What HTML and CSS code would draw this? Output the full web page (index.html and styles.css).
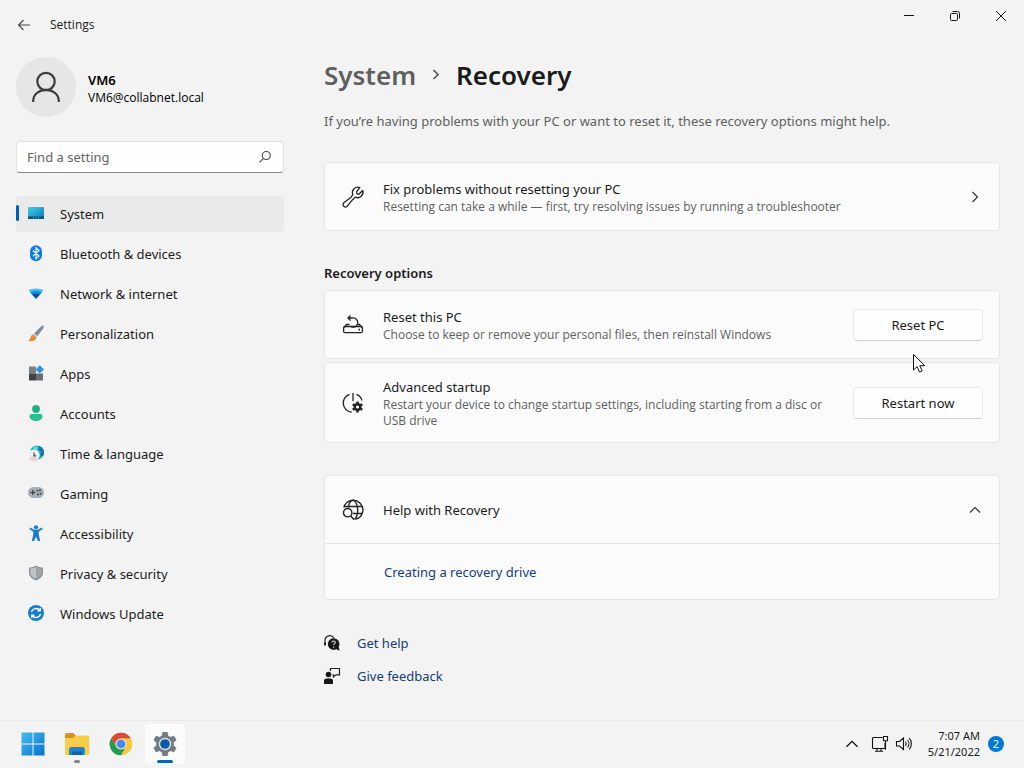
FILE: index.html
```
<!DOCTYPE html>
<html lang="en">
<head>
    <meta charset="UTF-8">
    <meta name="viewport" content="width=device-width, initial-scale=1.0">
    <title>Settings</title>
    <link rel="stylesheet" href="styles.css">
</head>
<body>

    <header class="titlebar">
        <button class="back-btn" aria-label="Back">
            <svg width="16" height="16" viewBox="0 0 16 16" fill="none" stroke="#444" stroke-width="1.1"><path d="M14 8H2.5M7.5 3L2.5 8l5 5"/></svg>
        </button>
        <span class="app-title">Settings</span>
        <div class="window-controls">
            <button aria-label="Minimize"><svg width="12" height="12" viewBox="0 0 12 12" fill="none" stroke="#111"><path d="M1 5.5h10"/></svg></button>
            <button aria-label="Restore"><svg width="12" height="12" viewBox="0 0 12 12" fill="none" stroke="#111"><rect x="1.500" y="3.500" width="7" height="7" rx="1"/><path d="M3.500 1.500h5a2 2 0 0 1 2 2v5"/></svg></button>
            <button aria-label="Close"><svg width="12" height="12" viewBox="0 0 12 12" fill="none" stroke="#111"><path d="M1 1l10 10M11 1L1 11"/></svg></button>
        </div>
    </header>

    <div class="window">
        <aside class="sidebar">
            <div class="profile">
                <div class="avatar">
                    <svg width="32" height="36" viewBox="0 0 32 36" fill="none" stroke="#3b3b3b" stroke-width="2.2"><circle cx="16" cy="12.500" r="8.700"/><path d="M3.200 33v-1.200a12.800 11 0 0 1 25.600 0V33"/></svg>
                </div>
                <div class="user">
                    <div class="user-name">VM6</div>
                    <div class="user-mail">VM6@collabnet.local</div>
                </div>
            </div>

            <div class="search">
                <input type="text" id="search" placeholder="Find a setting" aria-label="Find a setting">
                <svg width="14" height="14" viewBox="0 0 14 14" fill="none" stroke="#444" stroke-width="1.1"><circle cx="8.300" cy="5.500" r="4"/><path d="M5.400 8.400L1.500 12.300"/></svg>
            </div>

            <nav class="nav">
                <a href="#" class="nav-item active">
                    <svg width="16" height="16" viewBox="0 0 16 16"><defs><linearGradient id="sys" x1="0" y1="0" x2="1" y2="1"><stop offset="0" stop-color="#3fd0e6"/><stop offset="1" stop-color="#0d78bd"/></linearGradient></defs><rect y="1" width="16" height="12" rx="1" fill="url(#sys)"/><path d="M0 10.500h16V12a1 1 0 0 1-1 1H1a1 1 0 0 1-1-1z" fill="#0b4f7c"/><path d="M5 11.800h1M7.500 11.800h1M10 11.800h1" stroke="#6cc6ea"/></svg>
                    System
                </a>
                <a href="#" class="nav-item">
                    <svg width="16" height="16" viewBox="0 0 16 16"><rect x="2" y="-.8" width="12" height="16" rx="6" fill="#0f7be6"/><path d="M5 4.500L11 10l-3 2.700V1.800l3 2.700L5 10" fill="none" stroke="#fff" stroke-width="1.1"/></svg>
                    Bluetooth &amp; devices
                </a>
                <a href="#" class="nav-item">
                    <svg width="16" height="16" viewBox="0 0 16 16"><path d="M.5 4.500C2.500 1.700 13.500 1.700 15.500 4.500L8 12.800z" fill="#45c6ee"/><path d="M2.100 6.500c3-2.200 8.800-2.200 11.800 0L8 12.800z" fill="#1b8edb"/><path d="M4 8.500c2.200-1.400 5.800-1.400 8 0l-4 4.300z" fill="#0a4fa8"/></svg>
                    Network &amp; internet
                </a>
                <a href="#" class="nav-item">
                    <svg width="16" height="16" viewBox="0 0 16 16"><path d="M15.500-.2c.5.5.3 1.500-.2 2.400L9.500 10 6.300 7.300 13 .6c.9-.8 2-1.300 2.500-.8z" fill="#7e8c98"/><path d="M6.300 7.300L9.500 10l-1.200 1.500-3.200-2.900z" fill="#bcc5cb"/><path d="M5.200 8.500l3.200 3c-.4 3.300-4.500 4.700-8 3.300 2.200-.8 1.700-5.900 4.800-6.300z" fill="#ee8a35"/></svg>
                    Personalization
                </a>
                <a href="#" class="nav-item">
                    <svg width="16" height="16" viewBox="0 0 16 16"><path d="M1 .500h7v7H1z" fill="#7b7f82"/><path d="M1 7.500h7v7H1z" fill="#3e4245"/><path d="M8 7.500h7v7H8z" fill="#6a6e71"/><path d="M11.800-.8l4.200 4.200-4.200 4.200-4.200-4.200z" fill="#2c95e2"/></svg>
                    Apps
                </a>
                <a href="#" class="nav-item">
                    <svg width="16" height="16" viewBox="0 0 16 16"><circle cx="8" cy="3" r="3.900" fill="#24ae84"/><path d="M3.500 8h9a2 2 0 0 1 2 2c0 3.400-3 5-6.500 5s-6.500-1.600-6.500-5a2 2 0 0 1 2-2z" fill="#30bb90"/></svg>
                    Accounts
                </a>
                <a href="#" class="nav-item">
                    <svg width="16" height="16" viewBox="0 0 16 16"><circle cx="9" cy="6.500" r="7" fill="#20adc0"/><path d="M11 0a7 7 0 0 1 4 10.500L11.500 9l2-3-3-2.500z" fill="#1673b0"/><path d="M5 1.500l4-1.500 1 3-3 2z" fill="#63dad1"/><circle cx="5.900" cy="9.200" r="5.800" fill="#eff2f5"/><path d="M.8 12a5.800 5.800 0 0 0 9 1.500L6 10z" fill="#edd2d5"/><path d="M6 6.500v3.400h2.200" fill="none" stroke="#444" stroke-width="1.200"/></svg>
                    Time &amp; language
                </a>
                <a href="#" class="nav-item">
                    <svg width="16" height="16" viewBox="0 0 16 16"><rect y="1" width="16" height="11" rx="5.500" fill="#a8afb6"/><path d="M2.300 6.500h5M4.800 4v5" stroke="#353b40" stroke-width="1.200"/><circle cx="9.300" cy="4.700" r=".9" fill="#3e4449"/><circle cx="12" cy="4.200" r="1" fill="#3e4449"/><circle cx="10" cy="8.500" r="1" fill="#3e4449"/><circle cx="12.600" cy="7.800" r="1" fill="#3e4449"/></svg>
                    Gaming
                </a>
                <a href="#" class="nav-item">
                    <svg width="16" height="16" viewBox="0 0 16 16" fill="#177bd0"><circle cx="8" cy="1.300" r="2.100"/><path d="M2.200 1.500l4 2.300h3.600l4-2.300.9 1.500-4 2.700v3l1.500 6.200H10L8 10.700l-2 4.200H3.800l1.500-6.200v-3L1.300 3z"/></svg>
                    Accessibility
                </a>
                <a href="#" class="nav-item">
                    <svg width="16" height="16" viewBox="0 0 16 16"><path d="M8-.5c2 1.400 4.200 2 6.900 2.100V6.500c0 3.900-2.700 6.300-6.900 8C3.800 12.800 1.100 10.400 1.100 6.500V1.600C3.800 1.500 6 .9 8-.5z" fill="#858b90"/><path d="M8 .8C6.200 2 4.400 2.400 2.300 2.600v3.900c0 3.100 2 5 5.700 6.600z" fill="#bfc4c7"/><path d="M8 .8c1.800 1.200 3.600 1.600 5.700 1.800v3.900c0 3.100-2 5-5.700 6.600z" fill="#9fa5a9"/></svg>
                    Privacy &amp; security
                </a>
                <a href="#" class="nav-item">
                    <svg width="16" height="16" viewBox="0 0 16 16"><circle cx="8" cy="7" r="8" fill="#127fd2"/><path d="M3.500 6A4.800 4.800 0 0 1 12 4.500M12.500 8A4.800 4.800 0 0 1 4 9.500M12.300 2V4.800H9.500M3.700 12V9.200h2.800" fill="none" stroke="#fff" stroke-width="1.300"/></svg>
                    Windows Update
                </a>
            </nav>
        </aside>

        <main class="content">
            <h1 class="breadcrumb">
                <a href="#">System</a>
                <svg width="10" height="14" viewBox="0 0 10 14" fill="none" stroke="#555" stroke-width="1.700"><path d="M2.500 2L7 6.500 2.500 11"/></svg>
                <span>Recovery</span>
            </h1>
            <p class="intro">If you’re having problems with your PC or want to reset it, these recovery options might help.</p>

            <a href="#" class="card">
                <svg class="card-icon" width="22" height="22" viewBox="0 0 22 22" fill="none" stroke="#222" stroke-width="1.300" stroke-linejoin="round"><path d="M17.800 1.600a5.400 5.400 0 0 0-7 7L8.800 11.500 1.800 16.700a2.400 2.400 0 0 0 3.500 3.500l5.500-6.800 2.600-2.200a5.400 5.400 0 0 0 7.300-6.700l-3.900 3.800-1.700-.5-.6-1.900z"/></svg>
                <div class="card-text">
                    <div class="card-title">Fix problems without resetting your PC</div>
                    <div class="card-desc">Resetting can take a while — first, try resolving issues by running a troubleshooter</div>
                </div>
                <svg class="chevron" width="14" height="14" viewBox="0 0 14 14" fill="none" stroke="#333" stroke-width="1.200"><path d="M4.500 2L9.500 7l-5 5"/></svg>
            </a>

            <h2 class="section-title">Recovery options</h2>
            <section class="card-list">
                <div class="card">
                    <svg class="card-icon" width="22" height="22" viewBox="0 0 22 22" fill="none" stroke="#222" stroke-width="1.300"><rect x="1.600" y="12.500" width="18.800" height="6.200" rx="1.500"/><path d="M2 13.500l2.500-3h3M20 13.500l-2.500-3h-2"/><path d="M8.500 12.300a4.600 4.600 0 1 0 2-8.300H6M8.500 1.500L6 4l2.500 2.500"/><path d="M16.500 15.600h1.500" stroke-width="1.800"/></svg>
                    <div class="card-text">
                        <div class="card-title">Reset this PC</div>
                        <div class="card-desc">Choose to keep or remove your personal files, then reinstall Windows</div>
                    </div>
                    <button class="btn">Reset PC</button>
                </div>
                <div class="card">
                    <svg class="card-icon" width="22" height="22" viewBox="0 0 22 22" fill="none" stroke="#222" stroke-width="1.300"><path d="M11 1v8"/><path d="M7.500 2.300A9.200 9.200 0 0 0 9.800 20.200M14.500 2.300a9.200 9.200 0 0 1 5.500 6.200"/><circle cx="15.500" cy="15" r="2.800" stroke-width="2.400"/><path d="M15.500 9.500v2.500M15.500 18v2.500M10.700 12.200l2.200 1.300M18.100 16.500l2.200 1.300M10.700 17.800l2.200-1.300M18.100 13.500l2.200-1.300" stroke-width="2.400"/></svg>
                    <div class="card-text">
                        <div class="card-title">Advanced startup</div>
                        <div class="card-desc">Restart your device to change startup settings, including starting from a disc or USB drive</div>
                    </div>
                    <button class="btn">Restart now</button>
                </div>
            </section>

            <section class="expander">
                <button class="expander-head" aria-expanded="true">
                    <svg class="card-icon" width="22" height="22" viewBox="0 0 22 22" fill="none" stroke="#222" stroke-width="1.400"><path d="M1.800 8.500A9.700 9.700 0 1 1 14 20.200"/><path d="M6.500 8.500C7 4 9 1.300 11 1.300s4.700 4 4.700 9.700-1.200 7.500-3 9.500M2.300 7.500h17.400M11 14.500h9"/><circle cx="5.700" cy="13.700" r="4.200"/><path d="M8.700 17l3.500 3.800"/></svg>
                    <span class="card-title">Help with Recovery</span>
                    <svg class="chevron" width="14" height="14" viewBox="0 0 14 14" fill="none" stroke="#333" stroke-width="1.200"><path d="M2 9.500L7 4.500l5 5"/></svg>
                </button>
                <div class="expander-body"><a href="#">Creating a recovery drive</a></div>
            </section>

            <div class="help-links">
                <a href="#">
                    <svg width="16" height="16" viewBox="0 0 16 16"><path d="M1 10V5.500a4.800 4.800 0 0 1 9-2.300" fill="none" stroke="#222" stroke-width="1.200"/><path d="M0 7.500h2v3H0z" fill="#222"/><path d="M9.500 3.200a5.800 5.800 0 1 0 2.700 11l3.500 1.500-1-3.800A5.800 5.800 0 0 0 9.500 3.200z" fill="#181818"/><path d="M7.800 7.500c.2-2 3.700-1.800 3.500.1-.1 1.100-1.700 1.200-1.700 2.700M9.600 11.500v1.200" fill="none" stroke="#ccc" stroke-width="1.100"/></svg>
                    Get help
                </a>
                <a href="#">
                    <svg width="16" height="16" viewBox="0 0 16 16"><circle cx="4.500" cy="6.500" r="2.800" fill="#181818"/><path d="M0 16v-3a2.500 2.500 0 0 1 2.500-2.500h4A2.500 2.500 0 0 1 9 13v3z" fill="#181818"/><path d="M6.500 3V.5h9v6.400H12l-2.500 2v-2h-1" fill="none" stroke="#222" stroke-width="1.200"/></svg>
                    Give feedback
                </a>
            </div>
        </main>
    </div>

    <footer class="taskbar">
        <div class="task-apps">
            <button aria-label="Start"><svg width="24" height="24" viewBox="0 0 24 24"><defs><linearGradient id="win" x1="0" y1="0" x2="1" y2="1"><stop offset="0" stop-color="#43bdf0"/><stop offset="1" stop-color="#0872ca"/></linearGradient></defs><path d="M.5.500h11v11H.5zM12.500.500h11v11h-11zM.5 12.500h11v11H.5zM12.500 12.500h11v11h-11z" fill="url(#win)"/></svg></button>
            <button aria-label="File Explorer" class="running"><svg width="26" height="24" viewBox="0 0 26 24"><path d="M1 2.500A1.500 1.500 0 0 1 2.500 1h7l2.500 3v4H1z" fill="#d49718"/><path d="M1 6h8l2.500-2.500H24A1.200 1.200 0 0 1 25.200 5v16.500A1.500 1.500 0 0 1 23.700 23H2.500A1.500 1.500 0 0 1 1 21.500z" fill="#f8cd4b"/><path d="M5 23v-5.500A2.500 2.500 0 0 1 7.500 15h10.800a2.500 2.500 0 0 1 2.500 2.500V23z" fill="#1e82d2"/><path d="M8 23v-3.500h10V23z" fill="#1261a8"/></svg></button>
            <button aria-label="Google Chrome"><svg width="24" height="24" viewBox="0 0 24 24"><circle cx="12" cy="12" r="11.300" fill="#f8c83e"/><path d="M2.200 6.300A11.300 11.300 0 0 1 21.800 6.300H12a5.700 5.700 0 0 0-5 8.500z" fill="#d94a3d"/><path d="M2.200 6.300A11.300 11.300 0 0 0 12 23.300l4.900-8.500a5.700 5.700 0 0 1-9.800 0z" fill="#229a57"/><circle cx="12" cy="12" r="5.200" fill="#e8eefa"/><circle cx="12" cy="12" r="4.400" fill="#4688ef"/></svg></button>
            <button aria-label="Settings" class="current"><svg width="26" height="26" viewBox="0 0 26 26"><path d="M10.500 1h5l.8 3.700 2.200 1.200 3.500-1.200 2.500 4.300-2.700 2.600v2.800l2.700 2.600-2.500 4.300-3.500-1.200-2.200 1.200-.8 3.700h-5l-.8-3.700-2.200-1.200L4 21.300 1.500 17l2.700-2.600v-2.800L1.500 9 4 4.700l3.500 1.200 2.200-1.200z" fill="#747b82"/><circle cx="13" cy="13" r="6.200" fill="#d9e6f0"/><circle cx="13" cy="13" r="4.800" fill="#0b5ba7"/></svg></button>
        </div>
        <div class="tray">
            <button aria-label="Show hidden icons"><svg width="14" height="14" viewBox="0 0 14 14" fill="none" stroke="#111" stroke-width="1.300"><path d="M1.500 9.800L7 4.300l5.500 5.500"/></svg></button>
            <button aria-label="Network and volume" class="tray-status">
                <svg width="18" height="18" viewBox="0 0 18 18" fill="none" stroke="#111" stroke-width="1.100"><path d="M11.500 2.500h-9a1 1 0 0 0-1 1v9a1 1 0 0 0 1 1H14V8M4 16.200h8M6 13.500v2.700M10 13.500v2.700M12.500 1.500h4v4.200h-4zM14.500 5.700v9"/></svg>
                <svg width="18" height="18" viewBox="0 0 18 18" fill="none" stroke="#111" stroke-width="1.100"><path d="M1.500 6.500h3l4-3.500v11.500l-4-3.500h-3zM10.500 6.700a3.500 3.500 0 0 1 0 4.100M12.500 5a5.700 5.700 0 0 1 0 7.500M14.300 3.200a8.500 8.500 0 0 1 0 11.100"/></svg>
            </button>
            <div class="clock"><div>7:07 AM</div><div>5/21/2022</div></div>
            <span class="notify">2</span>
        </div>
    </footer>

    <svg class="cursor" width="14" height="20" viewBox="0 0 14 20"><path d="M.500.500V16l3.600-3.400 2.400 5.500 2.700-1.200-2.400-5.200h5z" fill="#fff" stroke="#111"/></svg>

</body>
</html>
```

FILE: styles.css
```
* { box-sizing: border-box; }
body { margin: 0; min-height: 100vh; display: flex; flex-direction: column; background: #f3f3f3; color: #1b1b1b; font-family: "Noto Sans", "Open Sans", sans-serif; font-size: 13px; line-height: 20px; }
button { font: inherit; color: inherit; background: none; border: none; padding: 0; display: flex; align-items: center; justify-content: center; }
a { color: #143c78; text-decoration: none; }
svg { flex: none; display: block; overflow: visible; }

.app-title, .user-mail, .card-desc { font-family: "Open Sans", "Noto Sans", sans-serif; font-size: 12px; line-height: 16px; }

.titlebar { height: 49px; display: flex; align-items: center; padding-left: 16px; }
.app-title { margin-left: 18px; }
.window-controls { margin-left: auto; align-self: flex-start; display: flex; }
.window-controls button { width: 46px; height: 32px; }

.window { flex: 1; display: flex; }
.sidebar { width: 300px; flex: none; padding: 8px 16px 0; }
.profile { display: flex; align-items: center; gap: 12px; margin-bottom: 24px; }
.avatar { width: 60px; height: 60px; border-radius: 50%; background: #e6e6e6; display: flex; align-items: center; justify-content: center; }
.user { padding-top: 2px; }
.user-name { font-weight: 600; color: #000; }
.user-mail { color: #000; }

.search { display: flex; align-items: center; height: 32px; padding: 0 11px 0 10px; background: #fefefe; border: 1px solid #e2e2e2; border-bottom-color: #868686; border-radius: 4px; margin-bottom: 23px; }
.search input { flex: 1; min-width: 0; border: none; outline: none; background: none; font: inherit; padding: 0; }
.search input::placeholder { color: #646464; opacity: 1; }

.nav { display: flex; flex-direction: column; gap: 4px; }
.nav-item { position: relative; display: flex; align-items: center; gap: 16px; height: 36px; padding-left: 12px; border-radius: 4px; color: #1b1b1b; }
.nav-item.active { background: #eaeaea; }
.nav-item.active::before { content: ""; position: absolute; left: 0; top: 9px; width: 3px; height: 16px; border-radius: 2px; background: #005fb8; }

.content { flex: 1; padding: 6px 24px 24px; }
.breadcrumb { display: flex; align-items: center; gap: 15px; margin: 0; font-size: 26px; line-height: 40px; font-weight: 600; }
.breadcrumb a { color: #5f5f5f; }
.intro { margin: 16px 0 31px; color: #5f5f5f; }
.card { display: flex; align-items: center; min-height: 69px; padding: 14px 16px 13px 17px; background: #fbfbfb; border: 1px solid #e5e5e5; border-radius: 4px; color: #1b1b1b; }
.card-icon { margin-right: 19px; }
.card-text { flex: 1; padding-right: 24px; }
.card-desc { color: #5f5f5f; }
.chevron { margin-left: auto; }
.card .chevron, .expander .chevron { margin-right: 1px; }
.section-title { margin: 32px 0 7px; font-size: 13px; line-height: 20px; font-weight: 600; }
.card-list { display: flex; flex-direction: column; gap: 3px; }
.btn { width: 130px; height: 32px; background: #fefefe; border: 1px solid #e9e9e9; border-bottom-color: #d0d0d0; border-radius: 4px; }

.expander { margin-top: 32px; background: #fbfbfb; border: 1px solid #e5e5e5; border-radius: 4px; }
.expander-head { width: 100%; height: 68px; justify-content: flex-start; padding: 0 16px 0 17px; border-bottom: 1px solid #e5e5e5; }
.expander-body { padding: 18px 59px 17px; }

.help-links { display: flex; flex-direction: column; align-items: flex-start; gap: 13px; margin-top: 33px; }
.help-links a { display: flex; align-items: center; gap: 17px; }

.taskbar { height: 48px; display: flex; align-items: center; justify-content: space-between; padding: 0 20px 1px 13px; background: #f3f3f3; border-top: 1px solid #e9e9e9; }
.task-apps { display: flex; gap: 4px; }
.task-apps button { position: relative; width: 40px; height: 40px; border-radius: 4px; }
.task-apps .current { background: #fbfbfb; }
.task-apps .running::after, .task-apps .current::after { content: ""; position: absolute; bottom: 1px; width: 6px; height: 3px; border-radius: 2px; background: #868686; }
.task-apps .current::after { width: 16px; background: #0f63b2; }
.tray { display: flex; align-items: center; font-size: 11px; line-height: 16px; }
.tray-status { gap: 6px; margin-left: 12px; }
.clock { margin-left: 15px; text-align: right; }
.notify { width: 16px; height: 16px; margin-left: 8px; border-radius: 50%; background: #0078d4; color: #fff; text-align: center; }

.cursor { position: absolute; left: 913px; top: 354px; }
```
